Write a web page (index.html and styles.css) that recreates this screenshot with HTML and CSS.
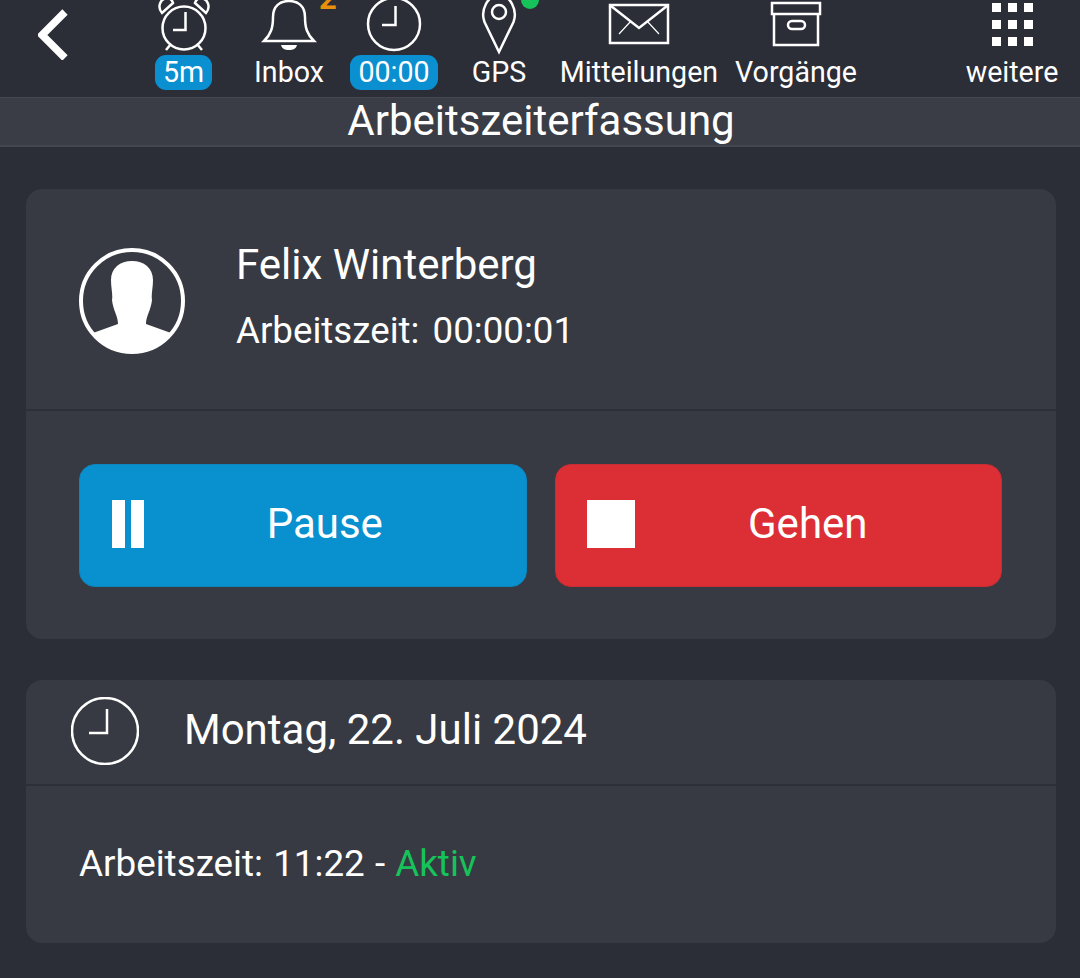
FILE: index.html
```html
<!DOCTYPE html>
<html lang="de">
<head>
  <meta charset="UTF-8" />
  <meta name="viewport" content="width=device-width, initial-scale=1.0" />
  <title>Arbeitszeiterfassung</title>
  <link rel="stylesheet" href="styles.css">
</head>
<body>
  <div class="topbar">
    <div class="back">
      <svg width="40" height="60" viewBox="0 0 40 60"><path d="M27 12 L4 35 L27 58" class="chevron"/></svg>
    </div>
    <div class="nav-item">
      <svg class="nav-icon" width="60" height="55" viewBox="0 0 60 55">
        <circle cx="30" cy="28" r="21.5" class="line"/>
        <path d="M31.500 12 V30 H19" class="line"/>
        <path d="M8 13 C3 7 6 -1 13 -2 C16 -2 18 0 19 3 Z M52 13 C57 7 54 -1 47 -2 C44 -2 42 0 41 3 Z" class="line"/>
        <path d="M17 44 L12 50 M43 44 L48 50" class="line"/>
      </svg>
      <div class="pill">5m</div>
    </div>
    <div class="nav-item">
      <svg class="nav-icon" width="60" height="55" viewBox="0 0 60 55">
        <path d="M5 41 C12 34 14 28 14 17 C14 6 21 1 30 1 C39 1 46 6 46 17 C46 28 48 34 55 41 Z" class="line"/>
        <path d="M22 45 H38 C37 49 34 50 30 50 C26 50 23 49 22 45 Z" class="solid"/>
      </svg>
      <span class="count">2</span>
      <div class="label">Inbox</div>
    </div>
    <div class="nav-item">
      <svg class="nav-icon" width="60" height="55" viewBox="0 0 60 55">
        <circle cx="30" cy="24" r="26" class="line"/>
        <path d="M31.500 6 V25 H18" class="line"/>
      </svg>
      <div class="pill">00:00</div>
    </div>
    <div class="nav-item">
      <svg class="nav-icon" width="60" height="55" viewBox="0 0 60 55">
        <path d="M30 52 L15.500 22 C11 10 19 -5 30 -5 C41 -5 49 10 44.500 22 Z" class="line"/>
        <circle cx="30" cy="12" r="7" class="line"/>
      </svg>
      <span class="dot"></span>
      <div class="label">GPS</div>
    </div>
    <div class="nav-item">
      <svg class="nav-icon" width="60" height="55" viewBox="0 0 60 55">
        <rect x="1" y="5" width="58" height="38" class="line"/>
        <path d="M2 6 L30 28 L58 6" class="line"/>
        <path d="M22 21 L10 34 M38 21 L50 34" class="thin"/>
      </svg>
      <div class="label">Mitteilungen</div>
    </div>
    <div class="nav-item">
      <svg class="nav-icon" width="60" height="55" viewBox="0 0 60 55">
        <rect x="6" y="3" width="48" height="11" class="line"/>
        <path d="M8 14 V45 H52 V14" class="line"/>
        <rect x="22" y="21" width="17" height="8" rx="4" class="line"/>
      </svg>
      <div class="label">Vorgänge</div>
    </div>
    <div class="nav-item nav-more">
      <div class="apps">
        <i></i><i></i><i></i><i></i><i></i><i></i><i></i><i></i><i></i>
      </div>
      <div class="label">weitere</div>
    </div>
  </div>

  <div class="title-bar">Arbeitszeiterfassung</div>

  <div class="content">
    <div class="card">
      <div class="person">
        <svg class="avatar" width="106" height="106" viewBox="0 0 106 106">
          <circle cx="53" cy="53" r="51" class="avatar-ring"/>
          <path d="M14 85 L39 76 C39 68 34 62 33 52 C34 47 32 40 32 32 C32 20 41 13 53 13 C65 13 74 20 74 32 C74 40 72 47 73 52 C72 62 67 68 67 76 L92 85 A51 51 0 0 1 14 85 Z" class="solid"/>
        </svg>
        <div class="person-text">
          <div class="name">Felix Winterberg</div>
          <div class="worktime">Arbeitszeit: 00:00:01</div>
        </div>
      </div>
      <div class="actions">
        <div class="btn btn-pause">
          <div class="btn-icon"><span class="bars"></span></div>
          <div class="btn-text">Pause</div>
        </div>
        <div class="btn btn-stop">
          <div class="btn-icon"><span class="square"></span></div>
          <div class="btn-text">Gehen</div>
        </div>
      </div>
    </div>

    <div class="card">
      <div class="day">
        <svg width="68" height="68" viewBox="0 0 68 68">
          <circle cx="34" cy="34" r="33" class="line"/>
          <path d="M36 12 V36 H18" class="line"/>
        </svg>
        <div class="date">Montag, 22. Juli 2024</div>
      </div>
      <div class="day-body">Arbeitszeit: 11:22 - <span class="active">Aktiv</span></div>
    </div>
  </div>
</body>
</html>
```

FILE: styles.css
```css
* {
  box-sizing: border-box;
}
body {
  margin: 0;
  height: 978px;
  overflow: hidden;
  font-family: Roboto, "Noto Sans", sans-serif;
  background-color: #2b2d37;
  color: #fff;
}

.topbar {
  display: grid;
  grid-template-columns: 131px 105px 106px 104px 106px 174px 140px 78px 136px;
  height: 97px;
  overflow: hidden;
}

.back {
  padding-left: 38px;
}

.back svg {
  display: block;
}

.chevron {
  fill: none;
  stroke: #fff;
  stroke-width: 7.500;
}

.nav-item {
  position: relative;
  display: flex;
  flex-direction: column;
  align-items: center;
}

.nav-more {
  grid-column: 9;
}

.nav-icon {
  display: block;
  overflow: visible;
  flex: none;
}

.line {
  fill: none;
  stroke: #fff;
  stroke-width: 2.500;
}

.thin {
  fill: none;
  stroke: #fff;
  stroke-width: 1.200;
}

.solid {
  fill: #fff;
}

.label {
  height: 35px;
  line-height: 35px;
  font-size: 28.600px;
  white-space: nowrap;
}

.pill {
  height: 35px;
  line-height: 34px;
  padding: 0 8px;
  font-size: 28.600px;
  background-color: #0a8fd0;
  border-radius: 11px;
}

.count {
  position: absolute;
  left: 83px;
  top: -20px;
  font-size: 31px;
  font-weight: 700;
  color: #e8900c;
}

.dot {
  position: absolute;
  left: 75px;
  top: -9px;
  width: 18px;
  height: 18px;
  border-radius: 50%;
  background-color: #16c35a;
}

.apps {
  display: grid;
  grid-template-columns: repeat(3, 9px);
  grid-auto-rows: 9px;
  gap: 8px 7px;
  height: 55px;
  padding-top: 3px;
}

.apps i {
  background-color: #fff;
}

.title-bar {
  height: 50px;
  padding-left: 2px;
  line-height: 45px;
  font-size: 42px;
  text-align: center;
  background-color: #3a3d45;
  border-top: 1px solid #44474f;
  border-bottom: 2px solid #44474f;
}

.content {
  padding: 42px 24px 0 26px;
  display: flex;
  flex-direction: column;
  gap: 41px;
}

.card {
  background-color: #373a42;
  border-radius: 16px;
}

.person {
  display: flex;
  align-items: center;
  gap: 51px;
  height: 222px;
  padding: 0 53px;
  border-bottom: 2px solid #2d2f38;
}

.avatar {
  flex: none;
  margin-top: 4px;
}

.avatar-ring {
  fill: none;
  stroke: #fff;
  stroke-width: 4;
}

.person-text {
  margin-bottom: 6px;
}

.name {
  font-size: 42px;
  line-height: 47px;
}

.worktime {
  margin-top: 22px;
  font-size: 36.700px;
  line-height: 41px;
  word-spacing: 4px;
}

.actions {
  display: grid;
  grid-template-columns: 1fr 1fr;
  gap: 28px;
  padding: 53px 54px 52px 53px;
}

.btn {
  display: flex;
  align-items: center;
  height: 123px;
  padding: 0 20px 4px 31px;
  border-radius: 16px;
  font-size: 42px;
}

.btn-pause {
  background-color: #0890cf;
  border: 1px solid #0c86bf;
  padding-left: 32px;
  padding-right: 36px;
}

.btn-stop {
  background-color: #dc2f35;
  border: 1px solid #c92c32;
}

.btn-icon {
  flex: none;
  width: 48px;
}

.btn-text {
  flex: 1;
  text-align: center;
}

.bars {
  display: block;
  width: 32px;
  height: 48px;
  border-left: 13px solid #fff;
  border-right: 13px solid #fff;
}

.square {
  display: block;
  width: 48px;
  height: 48px;
  background-color: #fff;
}

.day {
  display: flex;
  align-items: center;
  gap: 45px;
  height: 106px;
  padding: 0 0 2px 45px;
  border-bottom: 2px solid #2d2f38;
}

.date {
  font-size: 42px;
  margin-bottom: 4px;
}

.day-body {
  padding: 55px 53px 57px;
  font-size: 36.800px;
  line-height: 45px;
  word-spacing: 1px;
}

.active {
  color: #16c35a;
}
```
